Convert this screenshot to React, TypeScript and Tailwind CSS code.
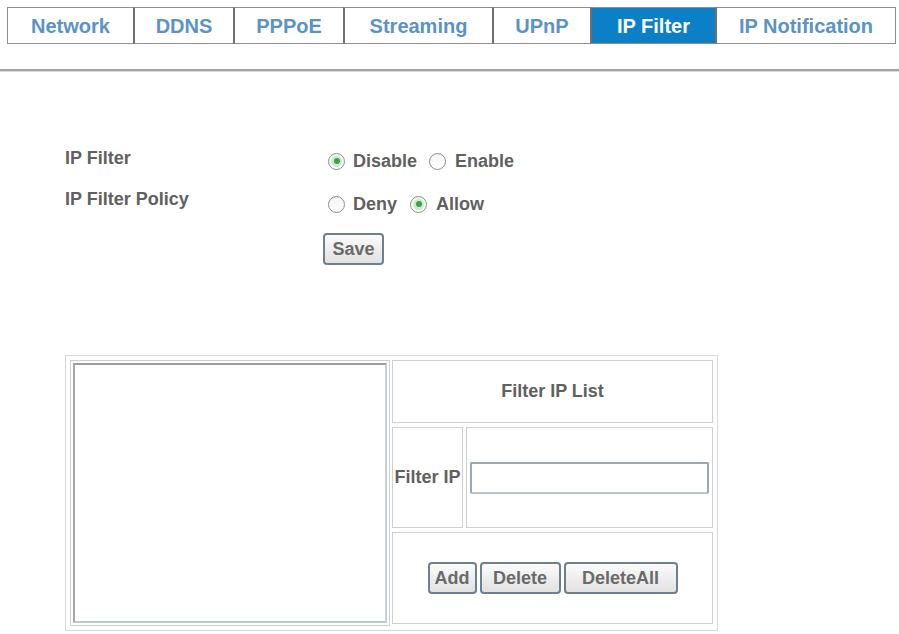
import React from "react";

const tabs = [
  { label: "Network", width: "w-[126px]" },
  { label: "DDNS", width: "w-[100px]" },
  { label: "PPPoE", width: "w-[110px]" },
  { label: "Streaming", width: "w-[149px]" },
  { label: "UPnP", width: "w-[98px]" },
  { label: "IP Filter", width: "w-[125px]", active: true },
  { label: "IP Notification", width: "w-[181px]" },
];

function Radio({ checked }: { checked?: boolean }) {
  return (
    <span className="inline-flex h-[17px] w-[17px] shrink-0 items-center justify-center rounded-full border border-[#8c8c8c] bg-gradient-to-b from-[#f4f4f4] to-[#ffffff]">
      {checked && (
        <span className="flex h-[11px] w-[11px] items-center justify-center rounded-full bg-[#c9ebc9]">
          <span className="h-[6px] w-[6px] rounded-full bg-[#3da24a]" />
        </span>
      )}
    </span>
  );
}

function Btn({ label, width }: { label: string; width: string }) {
  return (
    <button
      className={`${width} h-[32px] rounded-[4px] border-2 border-[#6e7f8f] bg-gradient-to-b from-[#fbfbfb] to-[#e1e1e1] text-[18px] font-bold leading-none text-[#6a6a6a]`}
    >
      {label}
    </button>
  );
}

export default function App() {
  return (
    <div className="h-[634px] w-full overflow-hidden bg-white font-['Liberation_Sans',Arial,sans-serif]">
      {/* Tabs */}
      <div className="pl-[7px] pt-[7px]">
        <div className="flex">
          {tabs.map((tab, i) => (
            <div
              key={tab.label}
              className={`${tab.width} flex h-[37px] items-center justify-center border-y border-[#8f8f8f] text-[20px] font-bold ${
                i === 0 ? "border-l" : "border-l-2 border-l-[#707070]"
              } ${i === tabs.length - 1 ? "border-r" : ""} ${
                tab.active ? "bg-[#0b80c6] text-white" : "bg-white text-[#5a93c8]"
              }`}
            >
              {tab.label}
            </div>
          ))}
        </div>
      </div>

      {/* Divider */}
      <div className="mt-[25px] h-[2px] w-full bg-[#a3a3a3]" />
      <div className="h-[1px] w-full bg-[#dedede]" />

      {/* Settings form */}
      <div className="mt-[75px] pl-[65px] text-[18px] font-bold text-[#606060]">
        <div className="flex h-[41px]">
          <div className="w-[258px] leading-[22px]">IP Filter</div>
          <div className="mt-[3px] flex h-[22px] items-center pl-[5px]">
            <Radio checked />
            <span className="ml-[8px] mr-[12px]">Disable</span>
            <Radio />
            <span className="ml-[9px]">Enable</span>
          </div>
        </div>
        <div className="flex h-[45px]">
          <div className="w-[258px] leading-[22px]">IP Filter Policy</div>
          <div className="mt-[5px] flex h-[22px] items-center pl-[5px]">
            <Radio />
            <span className="ml-[8px] mr-[13px]">Deny</span>
            <Radio checked />
            <span className="ml-[9px]">Allow</span>
          </div>
        </div>
        <div className="pl-[258px]">
          <Btn label="Save" width="w-[61px]" />
        </div>
      </div>

      {/* Filter IP list table */}
      <div className="ml-[65px] mt-[90px] w-[653px] border border-[#d9d9d9] p-[4px]">
        <div className="flex gap-[2px]">
          <div className="w-[321px] border border-[#cfcfcf] p-[2px]">
            <textarea className="block h-[260px] w-full resize-none border-2 border-t-[#9c9c9c] border-l-[#a6a6a6] border-r-[#c6d2d6] border-b-[#c0c8cc] bg-white outline-none" />
          </div>
          <div className="flex w-[321px] flex-col gap-[4px]">
            <div className="flex h-[63px] items-center justify-center border border-[#cfcfcf] text-[18px] font-bold text-[#606060]">
              Filter IP List
            </div>
            <div className="flex h-[101px] gap-[3px]">
              <div className="flex w-[72px] items-center justify-center border border-[#cfcfcf] text-[18px] font-bold text-[#606060]">
                Filter IP
              </div>
              <div className="flex flex-1 items-center border border-[#cfcfcf] px-[3px]">
                <input className="h-[32px] w-[239px] rounded-[2px] border-2 border-[#9aa8b6] border-b-[#b9c3cc] bg-white outline-none" />
              </div>
            </div>
            <div className="flex h-[92px] items-center justify-center gap-[3px] border border-[#cfcfcf]">
              <Btn label="Add" width="w-[49px]" />
              <Btn label="Delete" width="w-[81px]" />
              <Btn label="DeleteAll" width="w-[114px]" />
            </div>
          </div>
        </div>
      </div>
    </div>
  );
}
